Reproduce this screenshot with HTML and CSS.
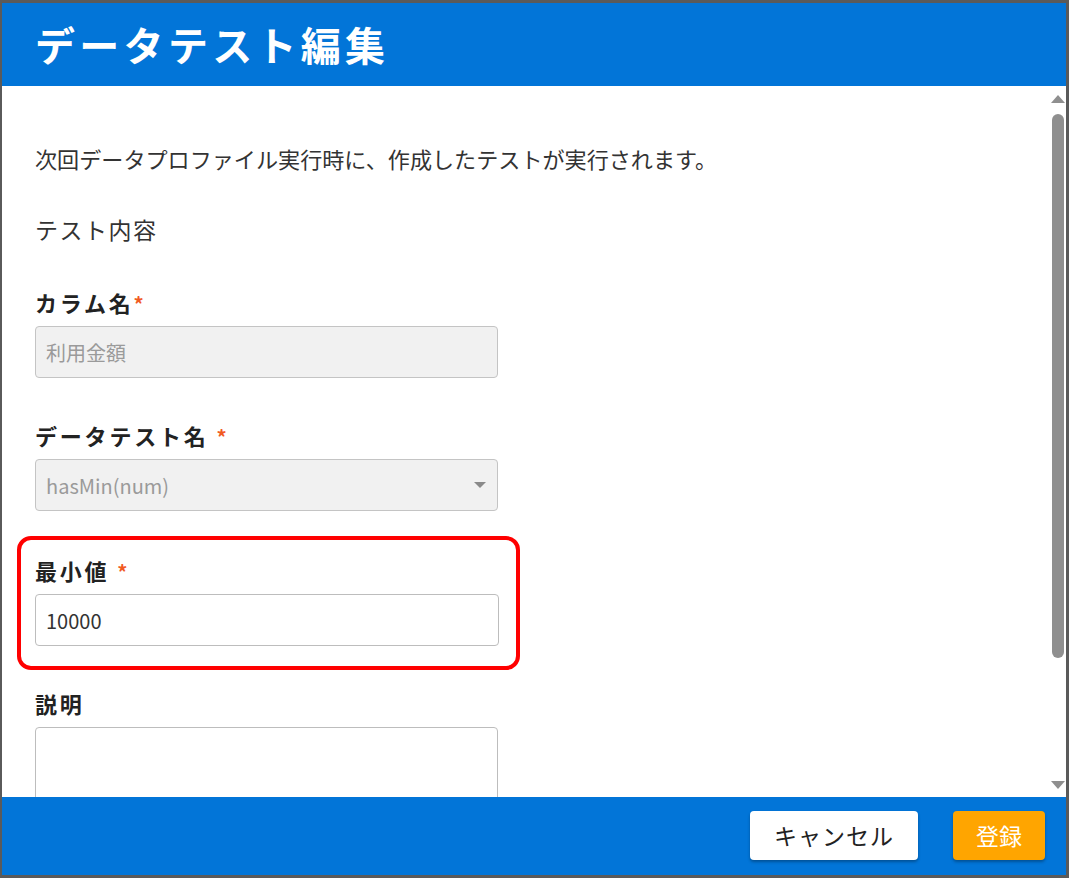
FILE: index.html
```html
<!DOCTYPE html>
<html lang="ja">
<head>
<meta charset="utf-8">
<title>データテスト編集</title>
<link rel="stylesheet" href="styles.css">
</head>
<body>
<div class="dialog">
  <header class="dialog-header">
    <h1 class="dialog-title">データテスト編集</h1>
  </header>

  <div class="dialog-body">
    <div class="body-content">
      <p class="intro">次回データプロファイル実行時に、作成したテストが実行されます。</p>
      <p class="section-title">テスト内容</p>

      <div class="field field-first">
        <label class="field-label">カラム名<span class="req">*</span></label>
        <div class="input input-disabled">利用金額</div>
      </div>

      <div class="field field-select">
        <label class="field-label">データテスト名 <span class="req">*</span></label>
        <div class="input input-disabled select">
          <span>hasMin(num)</span>
          <span class="caret"></span>
        </div>
      </div>

      <div class="field field-highlight">
        <label class="field-label">最小値 <span class="req">*</span></label>
        <div class="input input-value">10000</div>
      </div>

      <div class="field field-desc">
        <label class="field-label">説明</label>
        <div class="textarea"></div>
      </div>
    </div>

    <div class="scrollbar">
      <span class="arrow arrow-up"></span>
      <div class="track"><div class="thumb"></div></div>
      <span class="arrow arrow-down"></span>
    </div>
  </div>

  <footer class="dialog-footer">
    <button class="btn btn-cancel" type="button">キャンセル</button>
    <button class="btn btn-submit" type="button">登録</button>
  </footer>
</div>
</body>
</html>
```

FILE: styles.css
```css
* {
  box-sizing: border-box;
}

html, body {
  margin: 0;
  padding: 0;
  background: #ffffff;
}

body {
  font-family: "Noto Sans CJK JP", "Noto Sans", sans-serif;
  color: #333333;
}

.dialog {
  width: 1069px;
  height: 878px;
  display: flex;
  flex-direction: column;
  border-style: solid;
  border-color: #5a5a5a;
  border-width: 3px 3px 3px 2px;
  background: #ffffff;
  overflow: hidden;
}

/* header bar */
.dialog-header {
  flex: 0 0 83px;
  background: #0275d8;
  display: flex;
  align-items: center;
  padding-left: 33px;
  padding-bottom: 2px;
}

.dialog-title {
  margin: 0;
  color: #ffffff;
  font-size: 40px;
  font-weight: 700;
  letter-spacing: 4.3px;
  line-height: 1;
}

/* scrolling body */
.dialog-body {
  flex: 1 1 auto;
  display: flex;
  min-height: 0;
  overflow: hidden;
}

.body-content {
  flex: 1 1 auto;
  padding: 57px 0 0 33px;
  overflow: hidden;
}

.intro {
  margin: 0;
  font-size: 22.1px;
  line-height: 30px;
  color: #333333;
}

.section-title {
  margin: 41px 0 0;
  font-size: 23px;
  line-height: 30px;
  letter-spacing: 1.5px;
  color: #333333;
}

.field {
  width: 463px;
}

.field-first {
  margin-top: 43px;
}

.field-select {
  margin-top: 42px;
}

.field-label {
  display: block;
  font-size: 22px;
  font-weight: 700;
  letter-spacing: 2.8px;
  line-height: 30px;
  color: #222222;
  margin-bottom: 7px;
}

.req {
  color: #f15a22;
  font-size: 20px;
}

.input {
  height: 52px;
  border: 1px solid #c4c4c4;
  border-radius: 4px;
  padding: 0 10px;
  display: flex;
  align-items: center;
  font-size: 20px;
}

.input-disabled {
  background: #f1f1f1;
  color: #9a9a9a;
}

.select {
  justify-content: space-between;
}

.caret {
  width: 0;
  height: 0;
  border-left: 6px solid transparent;
  border-right: 6px solid transparent;
  border-top: 6px solid #8a8a8a;
  margin-right: 1px;
}

.input-value {
  background: #ffffff;
  border-color: #bdbdbd;
  color: #333333;
}

/* highlighted field */
.field-highlight {
  width: 503px;
  margin: 25px 0 0 -18px;
  padding: 15px 17px 20px 14px;
  border: 4px solid #ff0000;
  border-radius: 14px;
}

.field-desc {
  margin-top: 18px;
}

.field-desc .field-label {
  margin-bottom: 9px;
}

.textarea {
  height: 120px;
  border: 1px solid #bdbdbd;
  border-radius: 4px;
  background: #ffffff;
}

/* drawn scrollbar */
.scrollbar {
  flex: 0 0 16px;
  display: flex;
  flex-direction: column;
  align-items: center;
  padding: 9px 0 8px;
}

.arrow {
  width: 0;
  height: 0;
  border-left: 7px solid transparent;
  border-right: 7px solid transparent;
}

.arrow-up {
  border-bottom: 8px solid #8f8f8f;
}

.arrow-down {
  border-top: 8px solid #8f8f8f;
}

.track {
  flex: 1 1 auto;
  width: 12px;
  padding: 11px 0 0;
}

.thumb {
  width: 12px;
  height: 544px;
  background: #8f8f8f;
  border-radius: 6px;
}

/* footer bar */
.dialog-footer {
  flex: 0 0 78px;
  background: #0275d8;
  display: flex;
  justify-content: flex-end;
  align-items: flex-start;
  gap: 35px;
  padding: 14px 21px 0 0;
}

.btn {
  height: 49px;
  border: none;
  border-radius: 4px;
  font-family: "Noto Sans CJK JP", "Noto Sans", sans-serif;
  font-size: 23px;
  line-height: 1;
  cursor: pointer;
  box-shadow: 0 2px 3px rgba(0, 0, 0, 0.3);
}

.btn-cancel {
  width: 168px;
  background: #ffffff;
  color: #222222;
  letter-spacing: 1px;
}

.btn-submit {
  width: 92px;
  background: #ffa500;
  color: #ffffff;
}
```
